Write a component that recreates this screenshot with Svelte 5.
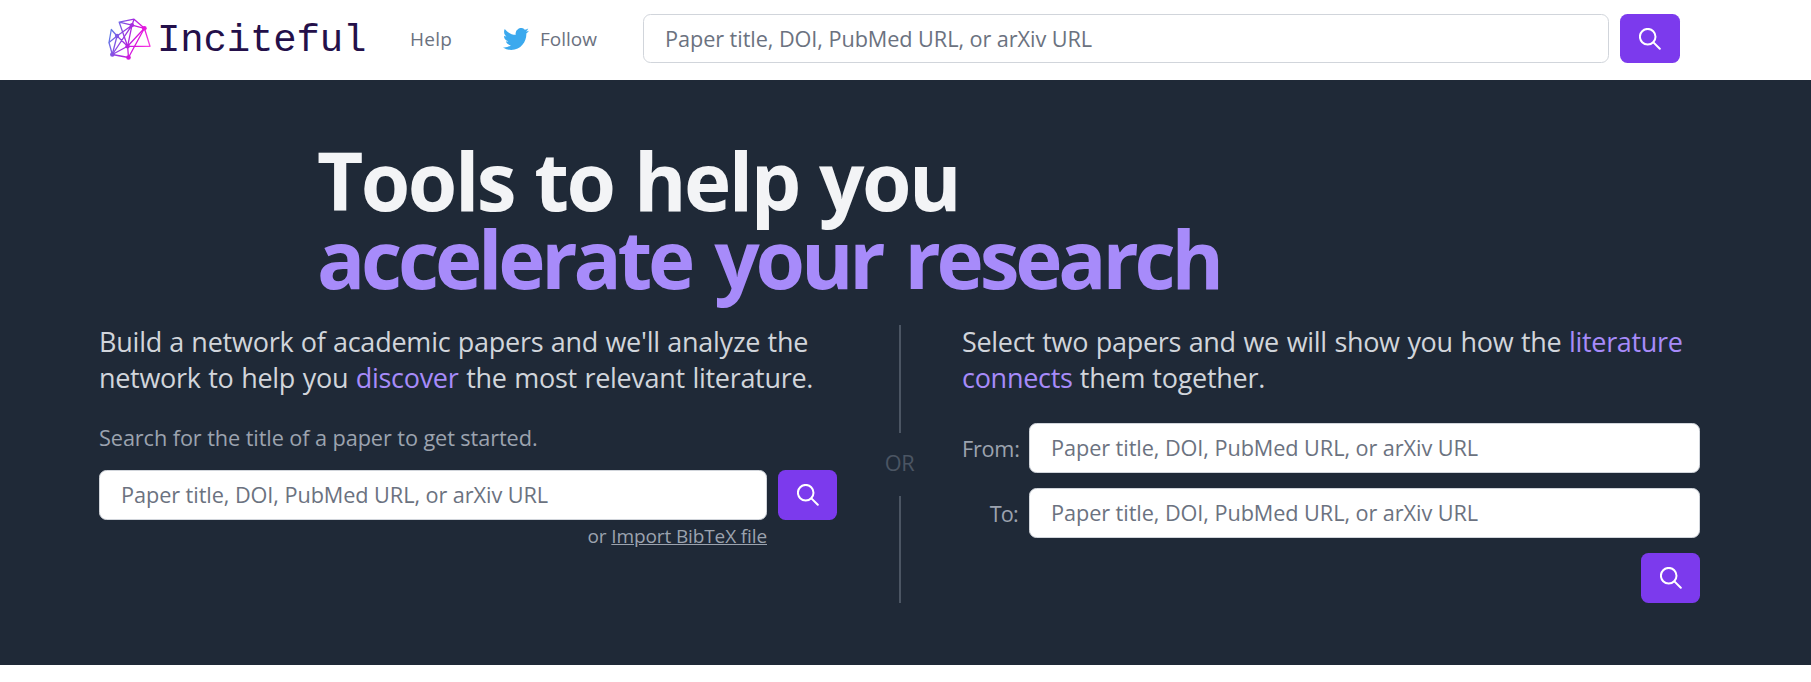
<script>
  const placeholder = 'Paper title, DOI, PubMed URL, or arXiv URL';
</script>

{#snippet searchButton()}
  <button class="search-button" type="submit" aria-label="Search">
    <svg viewBox="0 0 22 22" fill="none" stroke="currentColor" stroke-width="2" stroke-linecap="round">
      <circle cx="8.7" cy="8.7" r="7.8" />
      <path d="M14.4 14.4 20.8 20.8" />
    </svg>
  </button>
{/snippet}

<header>
  <div class="bar">
    <a class="logo" href="/" aria-label="Inciteful">
      <svg class="mark" viewBox="0 0 43 42" fill="none">
        <defs>
          <linearGradient id="ink" gradientUnits="userSpaceOnUse" x1="0" y1="16" x2="38" y2="30">
            <stop offset="0" stop-color="#5b85e8" />
            <stop offset="0.45" stop-color="#a02fe0" />
            <stop offset="0.75" stop-color="#e010dc" />
            <stop offset="1" stop-color="#f53be2" />
          </linearGradient>
        </defs>
        <g stroke="url(#ink)" stroke-width="1.3" stroke-linejoin="round">
          <path d="M11.2 4.2 26 1.2 36.4 10.3 42 28.3H19.6L11.2 4.2 24 7.2 26 1.2" />
          <path d="M24 7.2 36.4 10.3 19.6 28.3 24 7.2 9 18 3.3 11.5 1 24.5 9 18 19.6 28.3 4.3 36.5 24 7.2" />
          <path d="M1 24.5 4.3 36.5 20.5 39.5 19.6 28.3M4.3 36.5 9 18M36.4 10.3 20.5 39.5" />
        </g>
        <g fill="url(#ink)">
          <circle cx="24" cy="7.2" r="2.1" /><circle cx="36.4" cy="10.3" r="2.3" />
          <circle cx="9" cy="18" r="2.2" /><circle cx="19.6" cy="28.3" r="2.2" />
          <circle cx="4.3" cy="36.5" r="2.3" /><circle cx="20.5" cy="39.5" r="2.3" />
        </g>
      </svg>
      <span class="wordmark">Inciteful</span>
    </a>
    <nav>
      <a class="help" href="/help">Help</a>
      <a class="follow" href="/follow">
        <svg viewBox="0 2.2 24 19.6" preserveAspectRatio="none" fill="#3ba9ee">
          <path d="M23.953 4.57a10 10 0 01-2.825.775 4.958 4.958 0 002.163-2.723c-.951.555-2.005.959-3.127 1.184a4.92 4.92 0 00-8.384 4.482C7.69 8.095 4.067 6.13 1.64 3.162a4.822 4.822 0 00-.666 2.475c0 1.71.87 3.213 2.188 4.096a4.904 4.904 0 01-2.228-.616v.06a4.923 4.923 0 003.946 4.827 4.996 4.996 0 01-2.212.085 4.936 4.936 0 004.604 3.417 9.867 9.867 0 01-6.102 2.105c-.39 0-.779-.023-1.17-.067a13.995 13.995 0 007.557 2.209c9.053 0 13.998-7.496 13.998-13.985 0-.21 0-.42-.015-.63A9.935 9.935 0 0024 4.59z" />
        </svg>
        <span>Follow</span>
      </a>
    </nav>
    <form class="header-search">
      <input type="text" {placeholder} />
      {@render searchButton()}
    </form>
  </div>
</header>

<main>
  <h1>
    <span class="line-one">Tools to help you</span>
    <span class="line-two">accelerate your research</span>
  </h1>
  <div class="columns">
    <section class="discover">
      <p class="lead">
        <span class="l1">Build a network of academic papers and we'll analyze the</span><br />
        <span class="l2">network to help you <a href="/discover">discover</a> the most relevant literature.</span>
      </p>
      <p class="hint">Search for the title of a paper to get started.</p>
      <form class="row">
        <input type="text" {placeholder} />
        {@render searchButton()}
      </form>
      <p class="import">or <a href="/bibtex">Import BibTeX file</a></p>
    </section>

    <div class="divider">
      <i></i>
      <span>OR</span>
      <i></i>
    </div>

    <section class="connect">
      <p class="lead">
        <span class="r1">Select two papers and we will show you how the <a href="/connector">literature</a></span><br />
        <span class="r2"><a href="/connector">connects</a> them together.</span>
      </p>
      <form class="pair">
        <label for="from">From:</label>
        <input id="from" type="text" {placeholder} />
        <label class="to" for="to">To:</label>
        <input id="to" type="text" {placeholder} />
        {@render searchButton()}
      </form>
    </section>
  </div>
</main>

<style>
  :global(body) {
    background: #fff;
    font-family: 'Open Sans', 'Noto Sans', sans-serif;
  }
  * {
    box-sizing: border-box;
  }
  a {
    color: inherit;
    text-decoration: none;
  }
  p,
  h1 {
    margin: 0;
  }
  svg {
    display: block;
  }

  .bar {
    display: flex;
    height: 80px;
    padding: 14px 131px 17px 108px;
    align-items: center;
  }
  .logo {
    display: flex;
    align-items: center;
    width: 302px;
  }
  .mark {
    width: 43px;
    height: 42px;
    margin-right: 6px;
  }
  .wordmark {
    padding-top: 5px;
    color: #24104a;
    font-family: 'Liberation Mono', monospace;
    font-size: 39px;
    line-height: 44px;
    letter-spacing: -0.15px;
  }
  nav {
    display: flex;
    width: 233px;
    color: #6b7280;
    font-size: 19px;
    line-height: 28px;
  }
  .help {
    width: 93px;
    letter-spacing: 0.27px;
  }
  .follow {
    display: flex;
    align-items: center;
  }
  .follow svg {
    width: 26px;
    height: 22px;
    margin-right: 11px;
  }
  .header-search {
    display: flex;
    flex: 1;
    gap: 11px;
  }
  .header-search input,
  .header-search .search-button {
    height: 49px;
  }
  .header-search .search-button {
    width: 60px;
  }

  input {
    flex: 1;
    min-width: 0;
    height: 50px;
    padding: 0 21px;
    border: 1px solid #d1d5db;
    border-radius: 7.5px;
    background: #fff;
    font: 21.7px 'Open Sans', sans-serif;
    letter-spacing: -0.075px;
  }
  input::placeholder {
    color: #6b7280;
    opacity: 1;
  }
  .row input,
  .pair input {
    padding-bottom: 2px;
  }
  .search-button {
    display: flex;
    flex: none;
    align-items: center;
    justify-content: center;
    width: 59px;
    height: 50px;
    padding: 0;
    border: 0;
    border-radius: 7.5px;
    background: #7c3aed;
    color: #fff;
  }
  .search-button svg {
    width: 22px;
    height: 22px;
  }

  main {
    height: 585px;
    padding: 61px 111px 0 99px;
    background: #1f2937;
  }
  h1 {
    padding-left: 218px;
    font-size: 80px;
    font-weight: 700;
    line-height: 78px;
  }
  h1 span {
    display: block;
  }
  .line-one {
    color: #f3f4f6;
    letter-spacing: -2.5px;
    word-spacing: 2px;
  }
  .line-two {
    color: #a78bfa;
    letter-spacing: -4.2px;
    word-spacing: 6.5px;
  }
  .columns {
    display: grid;
    grid-template-columns: 738px 125px 738px;
    height: 278px;
    margin-top: 28px;
  }
  .lead {
    margin-top: -1px;
    color: #d1d5db;
    font-size: 27px;
    line-height: 36px;
    white-space: nowrap;
  }
  .lead a {
    color: #a78bfa;
  }
  .l1 {
    letter-spacing: -0.23px;
    word-spacing: 0.5px;
  }
  .l2 {
    letter-spacing: -0.31px;
    word-spacing: 1px;
  }
  .r1 {
    letter-spacing: -0.32px;
    word-spacing: 1px;
  }
  .r2 {
    letter-spacing: -0.28px;
    word-spacing: 0.5px;
  }
  .hint {
    margin-top: 27px;
    color: #9ca3af;
    font-size: 21.7px;
    line-height: 30px;
    letter-spacing: -0.09px;
  }
  .row {
    display: flex;
    gap: 11px;
    margin-top: 17px;
  }
  .import {
    width: 668px;
    margin-top: 4px;
    color: #9ca3af;
    font-size: 19px;
    line-height: 25px;
    letter-spacing: -0.12px;
    text-align: right;
  }
  .import a {
    text-decoration: underline;
  }
  .divider {
    display: flex;
    flex-direction: column;
    align-items: center;
    color: #4b5563;
    font-size: 21.7px;
    letter-spacing: -0.37px;
    line-height: 30px;
  }
  .divider i {
    flex: 1;
    width: 2px;
    background: #4b5563;
  }
  .divider span {
    padding: 15px 0 18px;
  }
  .pair {
    display: grid;
    grid-template-columns: 56px 671px;
    column-gap: 11px;
    row-gap: 15px;
    align-items: center;
    margin-top: 27px;
  }
  .pair label {
    color: #9ca3af;
    font-size: 21.7px;
    line-height: 30px;
    letter-spacing: -0.25px;
    text-align: right;
    white-space: nowrap;
    padding-top: 1px;
  }
  .pair .to {
    letter-spacing: -0.8px;
  }
  .pair .search-button {
    grid-column: 2;
    justify-self: end;
  }
</style>
